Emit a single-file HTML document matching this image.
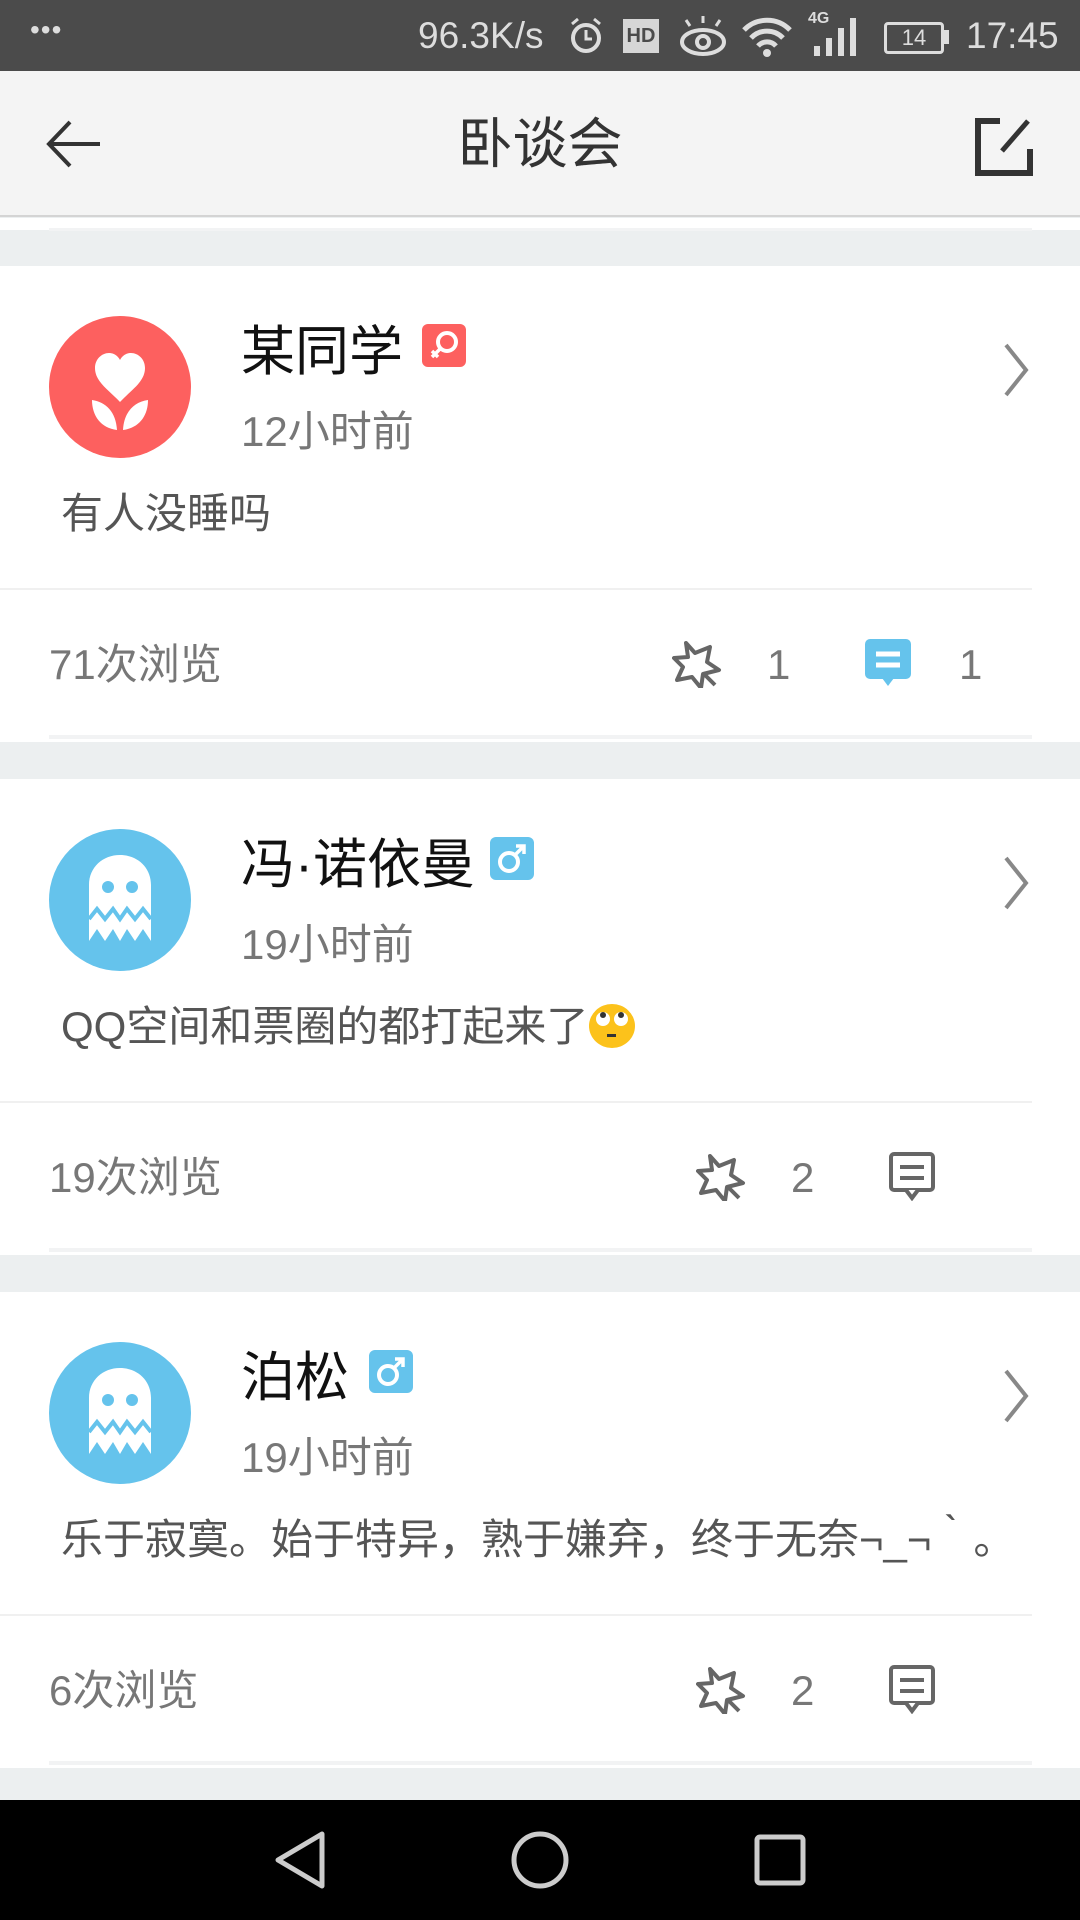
<!DOCTYPE html>
<html><head><meta charset="utf-8">
<style>
*{margin:0;padding:0;box-sizing:border-box}
body{width:1080px;height:1920px;background:#eceff0;position:relative;overflow:hidden;font-family:"Liberation Sans","Noto Sans CJK SC",sans-serif}
.abs{position:absolute}
.sb{left:0;top:0;width:1080px;height:71px;background:#4b4b4b;color:#ddd}
.tb{left:0;top:71px;width:1080px;height:146px;background:#f4f4f4;border-bottom:2px solid #d4d4d4}
.card{left:0;width:1080px;height:476px;background:#fff}
.name{left:241px;top:53px;font-size:54px;color:#111;line-height:66px;white-space:nowrap}
.time{left:241px;top:141px;font-size:42px;color:#777;line-height:50px}
.txt{left:61px;top:222px;font-size:42px;color:#555;line-height:52px;white-space:nowrap}
.div{left:0;top:322px;width:1032px;height:2px;background:#f0f0f0}
.bot{left:49px;top:469px;width:983px;height:4px;background:#f2f3f4}
.foot{top:373px;font-size:42px;color:#777;line-height:52px}
.badge{left:422px;top:58px;width:44px;height:43px;border-radius:6px}
</style></head><body>
<div class="abs sb">
 <div class="abs" style="left:30px;top:14px;font-size:28px;letter-spacing:1px">•••</div>
 <div class="abs" style="left:418px;top:14px;font-size:37px;line-height:44px">96.3K/s</div>
 <svg class="abs" style="left:568px;top:16px" width="36" height="40" viewBox="0 0 36 40"><circle cx="18" cy="22" r="13" fill="none" stroke="#ddd" stroke-width="4"/><path d="M18 14v9h6" stroke="#ddd" stroke-width="3" fill="none"/><path d="M4 8l6-5M32 8l-6-5" stroke="#ddd" stroke-width="3"/></svg>
 <div class="abs" style="left:623px;top:19px;width:36px;height:34px;background:#d6d6d6;color:#4b4b4b;font-size:20px;font-weight:bold;text-align:center;line-height:34px">HD</div>
 <svg class="abs" style="left:678px;top:14px" width="50" height="44" viewBox="0 0 50 44"><ellipse cx="25" cy="28" rx="21" ry="12" fill="none" stroke="#ddd" stroke-width="4"/><circle cx="25" cy="28" r="6" fill="none" stroke="#ddd" stroke-width="4"/><path d="M12 12l-4-6M25 9V2M38 12l4-6" stroke="#ddd" stroke-width="3"/></svg>
 <svg class="abs" style="left:740px;top:16px" width="54" height="42" viewBox="0 0 54 42"><path d="M4 14a32 32 0 0 1 46 0M11 22a22 22 0 0 1 32 0M18 30a12 12 0 0 1 18 0" stroke="#ddd" stroke-width="5" fill="none"/><circle cx="27" cy="37" r="4" fill="#ddd"/></svg>
 <div class="abs" style="left:808px;top:10px;font-size:16px;font-weight:bold">4G</div>
 <svg class="abs" style="left:812px;top:18px" width="46" height="38" viewBox="0 0 46 38"><rect x="2" y="28" width="6" height="10" fill="#ddd"/><rect x="14" y="20" width="6" height="18" fill="#ddd"/><rect x="26" y="10" width="6" height="28" fill="#ddd"/><rect x="38" y="0" width="6" height="38" fill="#ddd"/></svg>
 <div class="abs" style="left:884px;top:22px;width:60px;height:32px;border:3px solid #ddd;border-radius:4px;font-size:22px;text-align:center;line-height:26px">14</div>
 <div class="abs" style="left:944px;top:30px;width:5px;height:14px;background:#ddd"></div>
 <div class="abs" style="left:966px;top:14px;font-size:37px;line-height:44px">17:45</div>
</div>
<div class="abs tb">
 <svg class="abs" style="left:46px;top:48px" width="58" height="50" viewBox="0 0 58 50"><path d="M54 25H4M24 3L3 25l21 22" stroke="#333" stroke-width="4" fill="none"/></svg>
 <div class="abs" style="left:0;width:1080px;top:41px;text-align:center;font-size:55px;color:#333;line-height:64px">卧谈会</div>
 <svg class="abs" style="left:974px;top:46px" width="60" height="60" viewBox="0 0 60 60"><path d="M26 4H4v52h52V32" stroke="#333" stroke-width="6" fill="none"/><path d="M54 4L28 34" stroke="#333" stroke-width="5"/></svg>
</div>
<div class="abs" style="left:0;top:218px;width:1080px;height:12px;background:#fff"></div>
<div class="abs" style="left:49px;top:228px;width:983px;height:3px;background:#f2f3f4"></div>

<!-- card 1 -->
<div class="abs card" style="top:266px">
 <svg class="abs" style="left:49px;top:50px" width="142" height="142" viewBox="0 0 142 142"><circle cx="71" cy="71" r="71" fill="#fd605f"/><path d="M71 86C60 74 46 66 46 52c0-9 7-15 14-15 5 0 9 3 11 7 2-4 6-7 11-7 7 0 14 6 14 15 0 14-14 22-25 34z" fill="#fff"/><path d="M43 84c14 2 24 12 25 30-16-2-25-14-25-30zM99 84c-14 2-24 12-25 30 16-2 25-14 25-30z" fill="#fff"/></svg>
 <div class="abs name">某同学</div>
 <div class="abs badge" style="background:#fd605f"><svg width="44" height="43" viewBox="0 0 44 43"><circle cx="25" cy="18" r="9" fill="none" stroke="#fff" stroke-width="4"/><path d="M18 25l-8 8M10 27l6 6" stroke="#fff" stroke-width="3.5"/></svg></div>
 <div class="abs time">12小时前</div>
 <div class="abs txt">有人没睡吗</div>
 <svg class="abs" style="left:1002px;top:76px" width="30" height="56" viewBox="0 0 30 56"><path d="M4 3l20 25L4 53" stroke="#888" stroke-width="4" fill="none"/></svg>
 <div class="abs div"></div>
 <div class="abs foot" style="left:49px">71次浏览</div>
 <svg class="abs" style="left:672px;top:374px" width="50" height="48" viewBox="0 0 50 48"><path d="M14 3l9 10 15-6-3 15 12 8-16 4-2 14-9-11-15 3 6-13L2 18l14-1z" fill="none" stroke="#666" stroke-width="4" stroke-linejoin="round"/><path d="M31 33l12 12" stroke="#666" stroke-width="4"/></svg>
 <div class="abs foot" style="left:767px">1</div>
 <svg class="abs" style="left:864px;top:372px" width="48" height="50" viewBox="0 0 48 50"><rect x="1" y="1" width="46" height="40" rx="5" fill="#65c3ec"/><path d="M18 40h12l-6 8z" fill="#65c3ec"/><path d="M12 16h24M12 27h24" stroke="#fff" stroke-width="5"/></svg>
 <div class="abs foot" style="left:959px">1</div>
 <div class="abs bot"></div>
</div>

<!-- card 2 -->
<div class="abs card" style="top:779px">
 <svg class="abs" style="left:49px;top:50px" width="142" height="142" viewBox="0 0 142 142"><circle cx="71" cy="71" r="71" fill="#65c3ec"/><path d="M40 112V56c0-18 14-30 31-30s31 12 31 30v56l-8-12-8 12-8-12-7 12-7-12-8 12-8-12z" fill="#fff"/><path d="M40 90l8-10 8 10 8-10 7 10 7-10 8 10 8-10 8 10" stroke="#65c3ec" stroke-width="4" fill="none"/><circle cx="59" cy="58" r="6" fill="#65c3ec"/><circle cx="83" cy="58" r="6" fill="#65c3ec"/></svg>
 <div class="abs name">冯·诺依曼</div>
 <div class="abs badge" style="left:490px;background:#65c3ec"><svg width="44" height="43" viewBox="0 0 44 43"><circle cx="19" cy="25" r="9" fill="none" stroke="#fff" stroke-width="4"/><path d="M25 18l9-9M26 9h8v8" stroke="#fff" stroke-width="3.5" fill="none"/></svg></div>
 <div class="abs time">19小时前</div>
 <div class="abs txt">QQ空间和票圈的都打起来了<svg style="vertical-align:-8px" width="48" height="46" viewBox="0 0 48 46"><ellipse cx="24" cy="23" rx="23" ry="22" fill="#fcc21b"/><circle cx="15" cy="16" r="7" fill="#fff"/><circle cx="33" cy="16" r="7" fill="#fff"/><circle cx="15" cy="12" r="3" fill="#333"/><circle cx="33" cy="12" r="3" fill="#333"/><rect x="19" y="31" width="9" height="3" fill="#333"/></svg></div>
 <svg class="abs" style="left:1002px;top:76px" width="30" height="56" viewBox="0 0 30 56"><path d="M4 3l20 25L4 53" stroke="#888" stroke-width="4" fill="none"/></svg>
 <div class="abs div"></div>
 <div class="abs foot" style="left:49px">19次浏览</div>
 <svg class="abs" style="left:696px;top:374px" width="50" height="48" viewBox="0 0 50 48"><path d="M14 3l9 10 15-6-3 15 12 8-16 4-2 14-9-11-15 3 6-13L2 18l14-1z" fill="none" stroke="#666" stroke-width="4" stroke-linejoin="round"/><path d="M31 33l12 12" stroke="#666" stroke-width="4"/></svg>
 <div class="abs foot" style="left:791px">2</div>
 <svg class="abs" style="left:888px;top:372px" width="48" height="50" viewBox="0 0 48 50"><rect x="3" y="3" width="42" height="36" rx="3" fill="none" stroke="#666" stroke-width="4"/><path d="M18 39l6 8 6-8" fill="#fff" stroke="#666" stroke-width="4"/><path d="M12 16h24M12 27h24" stroke="#666" stroke-width="4"/></svg>
 <div class="abs bot"></div>
</div>

<!-- card 3 -->
<div class="abs card" style="top:1292px">
 <svg class="abs" style="left:49px;top:50px" width="142" height="142" viewBox="0 0 142 142"><circle cx="71" cy="71" r="71" fill="#65c3ec"/><path d="M40 112V56c0-18 14-30 31-30s31 12 31 30v56l-8-12-8 12-8-12-7 12-7-12-8 12-8-12z" fill="#fff"/><path d="M40 90l8-10 8 10 8-10 7 10 7-10 8 10 8-10 8 10" stroke="#65c3ec" stroke-width="4" fill="none"/><circle cx="59" cy="58" r="6" fill="#65c3ec"/><circle cx="83" cy="58" r="6" fill="#65c3ec"/></svg>
 <div class="abs name">泊松</div>
 <div class="abs badge" style="left:369px;background:#65c3ec"><svg width="44" height="43" viewBox="0 0 44 43"><circle cx="19" cy="25" r="9" fill="none" stroke="#fff" stroke-width="4"/><path d="M25 18l9-9M26 9h8v8" stroke="#fff" stroke-width="3.5" fill="none"/></svg></div>
 <div class="abs time">19小时前</div>
 <div class="abs txt">乐于寂寞。始于特异，熟于嫌弃，终于无奈¬_¬｀。</div>
 <svg class="abs" style="left:1002px;top:76px" width="30" height="56" viewBox="0 0 30 56"><path d="M4 3l20 25L4 53" stroke="#888" stroke-width="4" fill="none"/></svg>
 <div class="abs div"></div>
 <div class="abs foot" style="left:49px">6次浏览</div>
 <svg class="abs" style="left:696px;top:374px" width="50" height="48" viewBox="0 0 50 48"><path d="M14 3l9 10 15-6-3 15 12 8-16 4-2 14-9-11-15 3 6-13L2 18l14-1z" fill="none" stroke="#666" stroke-width="4" stroke-linejoin="round"/><path d="M31 33l12 12" stroke="#666" stroke-width="4"/></svg>
 <div class="abs foot" style="left:791px">2</div>
 <svg class="abs" style="left:888px;top:372px" width="48" height="50" viewBox="0 0 48 50"><rect x="3" y="3" width="42" height="36" rx="3" fill="none" stroke="#666" stroke-width="4"/><path d="M18 39l6 8 6-8" fill="#fff" stroke="#666" stroke-width="4"/><path d="M12 16h24M12 27h24" stroke="#666" stroke-width="4"/></svg>
 <div class="abs bot"></div>
</div>

<div class="abs" style="left:0;top:1800px;width:1080px;height:120px;background:#000">
 <svg class="abs" style="left:272px;top:30px" width="56" height="60" viewBox="0 0 56 60"><path d="M50 4L6 30l44 26z" fill="none" stroke="#ccc" stroke-width="5" stroke-linejoin="round"/></svg>
 <svg class="abs" style="left:510px;top:30px" width="60" height="60" viewBox="0 0 60 60"><circle cx="30" cy="30" r="26" fill="none" stroke="#ccc" stroke-width="5"/></svg>
 <svg class="abs" style="left:754px;top:34px" width="52" height="52" viewBox="0 0 52 52"><rect x="3" y="3" width="46" height="46" rx="3" fill="none" stroke="#ccc" stroke-width="5"/></svg>
</div>
</body></html>
